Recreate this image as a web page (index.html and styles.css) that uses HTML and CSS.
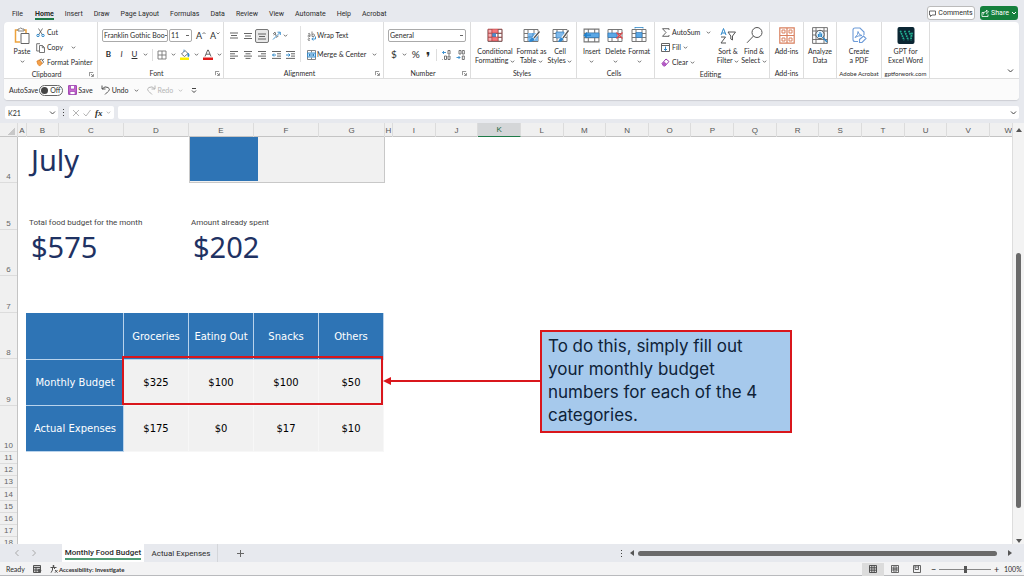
FILE: index.html
```html
<!DOCTYPE html>
<html lang="en">
<head>
<meta charset="utf-8">
<title>Monthly Food Budget</title>
<link rel="stylesheet" href="styles.css">
</head>
<body>
<svg class="defs" aria-hidden="true">
  <symbol id="chev" viewBox="0 0 6 6"><path d="M1 2l2 2 2-2" fill="none" stroke="#555" stroke-width="1"/></symbol>
  <symbol id="launch" viewBox="0 0 6 6"><path d="M.5 5V.5H5M2.500 2.500L5 5M5.300 2.500V5.300H2.500" fill="none" stroke="#555" stroke-width=".8"/></symbol>
  <symbol id="sheet" viewBox="0 0 16 16"><path d="M1 2h14v12H1zM1 6h14M1 10h14M5 2v12M11 2v12" fill="#fff" stroke="#777" stroke-width="1"/></symbol>
</svg>

<nav class="tabs">
  <button>File</button><button class="current">Home</button><button>Insert</button><button>Draw</button><button>Page Layout</button><button>Formulas</button><button>Data</button><button>Review</button><button>View</button><button>Automate</button><button>Help</button><button>Acrobat</button>
  <div class="tab-actions">
    <button class="comments"><svg width="7" height="7" viewBox="0 0 7 7"><path d="M.5 1h6v4H3L1.500 6.500V5h-1z" fill="none" stroke="#444" stroke-width=".8"/></svg>Comments</button>
    <button class="share"><svg width="8" height="8" viewBox="0 0 8 8"><path d="M3 3.500H1v4h6V5.500M2.500 5.500c0-2 1-3 3-3V1L7.500 3 5.500 4.700V3.500" fill="none" stroke="#fff" stroke-width=".8"/></svg>Share<svg width="6" height="6" viewBox="0 0 6 6"><path d="M1 2l2 2 2-2" fill="none" stroke="#fff"/></svg></button>
  </div>
</nav>

<header class="ribbon">
  <div class="groups">
    <section class="group clip">
      <div class="tools">
        <button class="big paste"><svg width="16" height="17" viewBox="0 0 16 17"><path d="M6 15H1.500V3H12v4" fill="none" stroke="#eda23c" stroke-width="1.500"/><path d="M4 4V2h1.500Q6.500-.5 8 2h2v2z" fill="#fff" stroke="#777" stroke-width=".9"/><path d="M7 6.500h8v10H7z" fill="#fff" stroke="#666"/></svg><span>Paste</span><svg class="c"><use href="#chev"/></svg></button>
        <div class="stack">
          <button><svg width="9" height="9" viewBox="0 0 9 9"><path d="M2.500.5l4 6.500M6.500.5l-4 6.500" stroke="#555" fill="none" stroke-width=".8"/><circle cx="2" cy="7.500" r="1.200" fill="none" stroke="#2f88c9"/><circle cx="7" cy="7.500" r="1.200" fill="none" stroke="#2f88c9"/></svg>Cut</button>
          <button><svg width="9" height="10" viewBox="0 0 9 10"><path d="M3 8H.7V.7H4M3.500 2.500h3l2 2v5h-5zM6.300 2.700v2h2" fill="none" stroke="#666" stroke-width=".9"/></svg>Copy<svg class="c far"><use href="#chev"/></svg></button>
          <button><svg width="9" height="9" viewBox="0 0 10 9"><path d="M1 3l3-1.500 3 4L4 8.500Q1.500 7 1 3z" fill="#f5a04a" stroke="#d97b1d" stroke-width=".8"/><path d="M4 2l2-1.500L8.500 4 7 5.500M6.500 2.500L9 .5" fill="none" stroke="#555" stroke-width=".9"/></svg>Format Painter</button>
        </div>
      </div>
      <footer><span>Clipboard</span><svg class="l"><use href="#launch"/></svg></footer>
    </section>

    <section class="group font">
      <div class="tools rows">
        <div class="line">
          <select class="face" aria-label="Font"><option>Franklin Gothic Boo</option></select>
          <select class="size" aria-label="Font size"><option>11</option></select>
          <button class="grow" aria-label="Increase font size">A<svg width="4" height="4" viewBox="0 0 4 4"><path d="M.5 3L2 1.500 3.500 3" fill="none" stroke="#555" stroke-width=".8"/></svg></button>
          <button class="shrink" aria-label="Decrease font size">A<svg width="4" height="4" viewBox="0 0 4 4"><path d="M.5 1.500L2 3 3.500 1.500" fill="none" stroke="#555" stroke-width=".8"/></svg></button>
        </div>
        <div class="line marks">
          <button class="b">B</button><button class="i">I</button><button class="u">U</button><svg class="c"><use href="#chev"/></svg>
          <span class="bar"></span>
          <button aria-label="Borders"><svg width="10" height="10" viewBox="0 0 10 10"><path d="M1 1h8v8H1zM5 1v8M1 5h8" fill="none" stroke="#777" stroke-width=".9"/></svg></button><svg class="c"><use href="#chev"/></svg>
          <button aria-label="Fill color"><svg width="10" height="11" viewBox="0 0 10 11"><path d="M1.500 5L5 1.500 8 4.500 4.500 7.500z" fill="#fff" stroke="#666" stroke-width=".9"/><path d="M8 4q2 2 .8 3.500T8 4M4 3V.5" fill="#2f88c9" stroke="#2f88c9" stroke-width=".7"/><path d="M0 8.500h9V11H0z" fill="#fdf000"/></svg></button><svg class="c"><use href="#chev"/></svg>
          <button aria-label="Font color"><svg width="10" height="11" viewBox="0 0 10 11"><path d="M2 7.500L4.700 1h.6L8 7.500M3 5.200h4" fill="none" stroke="#555" stroke-width=".9"/><path d="M0 8.500h10V11H0z" fill="#e01b1b"/></svg></button><svg class="c"><use href="#chev"/></svg>
        </div>
      </div>
      <footer><span>Font</span><svg class="l"><use href="#launch"/></svg></footer>
    </section>

    <section class="group align">
      <div class="tools split">
        <div class="rows">
          <div class="line al">
            <button aria-label="Top align"><svg width="8" height="8" viewBox="0 0 8 8"><path d="M0 1h8M1 3.500h6M0 6h8" stroke="#555" stroke-width=".9"/></svg></button>
            <button aria-label="Middle align"><svg width="8" height="8" viewBox="0 0 8 8"><path d="M0 1.500h8M1 4h6M0 6.500h8" stroke="#555" stroke-width=".9"/></svg></button>
            <button class="on" aria-label="Bottom align"><svg width="8" height="8" viewBox="0 0 8 8"><path d="M0 2h8M1 4.500h6M0 7h8" stroke="#555" stroke-width=".9"/></svg></button>
            <button aria-label="Orientation"><svg width="9" height="9" viewBox="0 0 9 9"><path d="M1 8.500L8 1.500M5.500 1.200L8.300 1.200V4" fill="none" stroke="#2f88c9" stroke-width=".9"/><path d="M1 3l2-2 1 4M1.500 4L4 2.500M4 6.500L6.500 5" fill="none" stroke="#666" stroke-width=".8"/></svg></button><svg class="c"><use href="#chev"/></svg>
          </div>
          <div class="line al">
            <button aria-label="Align left"><svg width="8" height="8" viewBox="0 0 8 8"><path d="M0 .5h8M0 2.800h5M0 5.100h8M0 7.400h5" stroke="#555" stroke-width=".9"/></svg></button>
            <button aria-label="Center"><svg width="8" height="8" viewBox="0 0 8 8"><path d="M0 .5h8M1.500 2.800h5M0 5.100h8M1.500 7.400h5" stroke="#555" stroke-width=".9"/></svg></button>
            <button aria-label="Align right"><svg width="8" height="8" viewBox="0 0 8 8"><path d="M0 .5h8M3 2.800h5M0 5.100h8M3 7.400h5" stroke="#555" stroke-width=".9"/></svg></button>
            <button aria-label="Decrease indent"><svg width="9" height="8" viewBox="0 0 9 8"><path d="M0 .5h9M5 2.800h4M5 5.100h4M0 7.400h9" stroke="#555" stroke-width=".9"/><path d="M4 4H.5M2 2.500L.5 4 2 5.500" fill="none" stroke="#2f88c9"/></svg></button>
            <button aria-label="Increase indent"><svg width="9" height="8" viewBox="0 0 9 8"><path d="M0 .5h9M5 2.800h4M5 5.100h4M0 7.400h9" stroke="#555" stroke-width=".9"/><path d="M0 4h4M2.500 2.500L4 4 2.500 5.500" fill="none" stroke="#2f88c9"/></svg></button>
          </div>
        </div>
        <div class="rows wrap">
          <div class="line"><button><svg width="9" height="10" viewBox="0 0 9 10"><path d="M1 3q2-1.500 2 .5v2M3 4Q.5 4 1 5.500T3 5M5 .5v5Q8 6 7.500 4T5 3.500M3 7.500Q.5 7.500 1 8.800T3 9" fill="none" stroke="#777" stroke-width=".9"/><path d="M8.500 5.500v2.500H5M6.300 6.500L4.800 8l1.500 1.500" fill="none" stroke="#2f88c9" stroke-width=".9"/></svg>Wrap Text</button></div>
          <div class="line"><button><svg width="9" height="10" viewBox="0 0 9 10"><path d="M.5.5h8v9h-8zM4.500.5v2M4.500 7.500v2" fill="#fff" stroke="#777" stroke-width=".9"/><path d="M.5 3h8v4h-8z" fill="#bfe0f7" stroke="#2f88c9" stroke-width=".9"/><path d="M2 5h5M3 4L2 5l1 1M6 4l1 1-1 1" fill="none" stroke="#1769a8" stroke-width=".7"/></svg>Merge &amp; Center<svg class="c far"><use href="#chev"/></svg></button></div>
        </div>
      </div>
      <footer><span>Alignment</span><svg class="l"><use href="#launch"/></svg></footer>
    </section>

    <section class="group number">
      <div class="tools rows">
        <div class="line"><select class="format" aria-label="Number format"><option>General</option></select></div>
        <div class="line nums">
          <button>$</button><svg class="c"><use href="#chev"/></svg><button>%</button><button class="comma">&#10076;</button><span class="bar"></span>
          <button aria-label="Increase decimal"><svg width="9" height="10" viewBox="0 0 9 10"><path d="M4 2.500H.5M2 1L.5 2.500 2 4" fill="none" stroke="#2f88c9" stroke-width=".9"/><path d="M6 .5h2v3.500H6zM2.500 6h2v3.500h-2zM6 6h2v3.500H6zM.5 9v.6" fill="none" stroke="#666" stroke-width=".9"/></svg></button>
          <button aria-label="Decrease decimal"><svg width="9" height="10" viewBox="0 0 9 10"><path d="M.5 7.500H4M2.500 6L4 7.500 2.500 9" fill="none" stroke="#2f88c9" stroke-width=".9"/><path d="M3 .5h2v3.500H3zM6.300.5h2v3.500h-2zM6.300 6h2v3.500h-2z" fill="none" stroke="#666" stroke-width=".9"/></svg></button>
        </div>
      </div>
      <footer><span>Number</span><svg class="l"><use href="#launch"/></svg></footer>
    </section>

    <section class="group styles">
      <div class="tools even">
        <button class="big w40"><svg width="16" height="16"><use href="#sheet"/><path d="M5 2h6v4H5zM5 10h6v4H5z" fill="#f4777c"/><path d="M1 2h4v12H1z" fill="#f4777c" opacity=".6"/><path d="M5 6h4v4H5z" fill="#4a8fd0"/><path d="M1 2h14v12H1zM5 2v12M11 2v12M1 6h14M1 10h14" fill="none" stroke="#a33" stroke-width=".5"/></svg><span>Conditional<br>Formatting <svg class="c"><use href="#chev"/></svg></span></button>
        <button class="big w32"><svg width="17" height="16"><use href="#sheet" width="16"/><path d="M5 6h10v8H5z" fill="#7db9ec"/><path d="M5 10h10M10 6v8" stroke="#2f78b8" stroke-width=".7"/><path d="M16 5l-6 7" stroke="#fff" stroke-width="3"/><path d="M16.500 4.500L11 11" stroke="#555" stroke-width="1.300"/><path d="M6 15q1-4 4-4.500 2 1 1 2.500-2 2.500-5 2z" fill="#2f88d0"/></svg><span>Format as<br>Table <svg class="c"><use href="#chev"/></svg></span></button>
        <button class="big w26"><svg width="17" height="16"><use href="#sheet" width="16"/><path d="M4 5h8v6H4z" fill="#7db9ec" stroke="#2f78b8" stroke-width=".7"/><path d="M16 4l-6 8" stroke="#fff" stroke-width="3"/><path d="M16.500 3.500L11 11" stroke="#555" stroke-width="1.300"/><path d="M6 15q1-4 4-4.500 2 1 1 2.500-2 2.500-5 2z" fill="#2f88d0"/></svg><span>Cell<br>Styles <svg class="c"><use href="#chev"/></svg></span></button>
      </div>
      <footer><span>Styles</span></footer>
    </section>

    <section class="group cells">
      <div class="tools even">
        <button class="big w24"><svg width="17" height="16"><use href="#sheet" width="17"/><path d="M3 6h13v4.500H3z" fill="#5ba8e6" stroke="#2f78b8" stroke-width=".7"/><path d="M8 8.200H1.500M4 5.700L1.300 8.200 4 10.700" fill="none" stroke="#1e7ec8" stroke-width="1.200"/></svg><span>Insert<br><svg class="c"><use href="#chev"/></svg></span></button>
        <button class="big w24"><svg width="17" height="16"><use href="#sheet" width="16"/><path d="M1 6h9v4.500H1z" fill="#5ba8e6" stroke="#2f78b8" stroke-width=".7"/><path d="M9.500 5.500l6 6M15.500 5.500l-6 6" stroke="#e0454b" stroke-width="1.300"/></svg><span>Delete<br><svg class="c"><use href="#chev"/></svg></span></button>
        <button class="big w24"><svg width="16" height="16"><use href="#sheet"/><path d="M5 5.500h6v5H5z" fill="#5ba8e6" stroke="#2f78b8" stroke-width=".7"/><path d="M4 .5h8M4 0v1.500M12 0v1.500" stroke="#2f88c9" stroke-width=".8"/></svg><span>Format<br><svg class="c"><use href="#chev"/></svg></span></button>
      </div>
      <footer><span>Cells</span></footer>
    </section>

    <section class="group editing">
      <div class="tools">
        <div class="stack">
          <button><svg width="9" height="9" viewBox="0 0 9 9"><path d="M8 2V.7H1.500L5 4.500 1.500 8.300H8V7" fill="none" stroke="#555" stroke-width=".9"/></svg>AutoSum<svg class="c far"><use href="#chev"/></svg></button>
          <button><svg width="9" height="9" viewBox="0 0 9 9"><path d="M.5.5h8v8h-8zM.5 2.500h8" fill="#fff" stroke="#555" stroke-width=".9"/><path d="M4.500 3.500v4M3 6l1.500 1.500L6 6" fill="none" stroke="#2f88c9"/></svg>Fill<svg class="c"><use href="#chev"/></svg></button>
          <button><svg width="9" height="9" viewBox="0 0 9 9"><path d="M1 5.500l4-4.500 3 2.500-4 4.500H2.500z" fill="#fff" stroke="#9b3fae"/><path d="M1 5.500L3 3.500l3 2.500-2 2H2.500z" fill="#b35ac4"/></svg>Clear<svg class="c"><use href="#chev"/></svg></button>
        </div>
        <button class="big w26"><svg width="16" height="16" viewBox="0 0 16 16"><path d="M1 7.500L3.500 1 6 7.500M1.800 5.500h3.400" fill="none" stroke="#2f88c9"/><path d="M1 9.500h4.500L1 15.500h5" fill="none" stroke="#555"/><path d="M8 4.500h7.500l-3 4v4l-1.700-1v-3z" fill="none" stroke="#555"/></svg><span>Sort &amp;<br>Filter <svg class="c"><use href="#chev"/></svg></span></button>
        <button class="big w26"><svg width="17" height="17" viewBox="0 0 17 17"><circle cx="11" cy="5.500" r="5" fill="none" stroke="#555"/><path d="M7.500 9L1 15.800" stroke="#555"/></svg><span>Find &amp;<br>Select <svg class="c"><use href="#chev"/></svg></span></button>
      </div>
      <footer><span>Editing</span></footer>
    </section>

    <section class="group addins">
      <div class="tools"><button class="big"><svg width="16" height="17" viewBox="0 0 16 17"><path d="M.8.800h14.400v15.400H.800zM8 .8v15.400M.8 8.500h14.400" fill="none" stroke="#d9805f" stroke-width="1.200"/><path d="M3 3h3v3H3zM10 3h3v3h-3zM3 11h3v3H3zM10 11h3v3h-3z" fill="#fff" stroke="#d9805f"/></svg><span>Add-ins</span></button></div>
      <footer><span>Add-ins</span></footer>
    </section>
    <section class="group analyze">
      <div class="tools"><button class="big"><svg width="16" height="17" viewBox="0 0 16 17"><path d="M.6.600h14.800v15.800H.600zM.6 4h14.800M.6 12.500h14.800M4 .6v15.800M12 .6v15.800M.6 8h3.400" fill="none" stroke="#666" stroke-width=".9"/><circle cx="8" cy="7.500" r="4.200" fill="#e4f2fc" stroke="#555"/><path d="M6.500 10V7M8 10V5M9.500 10V6.500" stroke="#2f88c9" stroke-width="1.200"/><path d="M11 10.500l4 4.500" stroke="#2f88c9" stroke-width="1.500"/></svg><span>Analyze<br>Data</span></button></div>
    </section>
    <section class="group acrobat">
      <div class="tools"><button class="big"><svg width="15" height="17" viewBox="0 0 15 17"><path d="M6 14.500H3q-2 0-2-2V3q0-2 2-2h5l4 4v3" fill="none" stroke="#6d9bd8" stroke-width="1.100"/><path d="M3 10.500Q6.500 7.500 6 4.500 7 8.500 10 8.500 6 8.500 3 10.500" fill="none" stroke="#6d9bd8"/><path d="M7.500 12.500l4-3.500 2.500 2.500-4 4H7.500z" fill="#fff" stroke="#6d9bd8" stroke-width="1.100"/></svg><span>Create<br>a PDF</span></button></div>
      <footer><span>Adobe Acrobat</span></footer>
    </section>
    <section class="group gpt">
      <div class="tools"><button class="big"><svg width="18" height="18" viewBox="0 0 18 18"><rect width="18" height="18" rx="2" fill="#0b2633"/><path d="M3 4l4 10M7.500 4l4 10M12 4l2.500 6M15.500 6l-1.500 8" stroke="#22b392" stroke-width="1.800" stroke-dasharray="1.800 .8"/></svg><span>GPT for<br>Excel Word</span></button></div>
      <footer><span>gptforwork.com</span></footer>
    </section>
    <button class="collapse" aria-label="Collapse ribbon"><svg width="7" height="6" viewBox="0 0 7 6"><path d="M1 1.500L3.500 4 6 1.500" fill="none" stroke="#444"/></svg></button>
  </div>

  <div class="quick">
    <label class="autosave">AutoSave<input type="checkbox"><span class="toggle"><i></i>Off</span></label>
    <button class="save"><svg width="9" height="10" viewBox="0 0 9 10"><path d="M.6.600h7.800v8.800H.600z" fill="#c868d0" stroke="#9b3fae"/><path d="M2.500.5h4v3.500h-4zM2 6.500h5v3H2z" fill="#fff" stroke="#9b3fae" stroke-width=".7"/></svg>Save</button>
    <button class="undo"><svg width="9" height="10" viewBox="0 0 9 10"><path d="M1 .5V4h3.500M1 4Q4 .5 7 2.500T6.500 7L4 9.500" fill="none" stroke="#555"/></svg>Undo<svg class="c"><use href="#chev"/></svg></button>
    <button class="redo" disabled><svg width="9" height="10" viewBox="0 0 9 10"><path d="M8 .5V4H4.500M8 4Q5 .5 2 2.500T2.500 7L5 9.500" fill="none" stroke="#b5b5b5"/></svg>Redo<svg class="c"><use href="#chev"/></svg></button>
    <button aria-label="Customize toolbar"><svg width="6" height="7" viewBox="0 0 6 7"><path d="M1 1.500h4M1 3.500L3 5.500 5 3.500" fill="none" stroke="#444"/></svg></button>
  </div>
</header>

<div class="formula">
  <label class="namebox"><input value="K21" aria-label="Name box"><svg width="7" height="6" viewBox="0 0 7 6"><path d="M1 1.500L3.500 4 6 1.500" fill="none" stroke="#555"/></svg></label>
  <span class="dots"></span>
  <div class="fx"><svg width="8" height="8" viewBox="0 0 8 8"><path d="M1 1l6 6M7 1L1 7" stroke="#b5b5b5"/></svg><svg width="8" height="8" viewBox="0 0 8 8"><path d="M.5 4.500L3 7l4.500-6" fill="none" stroke="#b5b5b5"/></svg><button>fx</button><svg class="c faint"><use href="#chev"/></svg></div>
  <label class="entry"><input aria-label="Formula bar"><svg width="7" height="6" viewBox="0 0 7 6"><path d="M1 1.500L3.500 4 6 1.500" fill="none" stroke="#444"/></svg></label>
</div>

<main class="book">
  <div class="pane">
    <div class="cols"><span class="corner"></span><span>A</span><span>B</span><span>C</span><span>D</span><span>E</span><span>F</span><span>G</span><span>H</span><span>I</span><span>J</span><span class="sel">K</span><span>L</span><span>M</span><span>N</span><span>O</span><span>P</span><span>Q</span><span>R</span><span>S</span><span>T</span><span>U</span><span>V</span><span>W</span></div>
    <div class="view">
      <div class="rownums"><span>4</span><span>5</span><span>6</span><span>7</span><span>8</span><span>9</span><span>10</span><span>11</span><span>12</span><span>13</span><span>14</span><span>15</span><span>16</span><span>17</span><span>18</span></div>
      <div class="sheet">
        <div class="top">
          <h1>July</h1>
          <div class="progress"><div class="spent"></div></div>
        </div>
        <div class="totals">
          <div><p>Total food budget for the month</p><strong>$575</strong></div>
          <div><p>Amount already spent</p><strong>$202</strong></div>
        </div>
        <table>
          <colgroup><col class="first"><col><col><col><col></colgroup>
          <tr><th></th><th>Groceries</th><th>Eating Out</th><th>Snacks</th><th>Others</th></tr>
          <tr><th>Monthly Budget</th><td>$325</td><td>$100</td><td>$100</td><td>$50</td></tr>
          <tr><th>Actual Expenses</th><td>$175</td><td>$0</td><td>$17</td><td>$10</td></tr>
        </table>
        <div class="frame"></div>
        <svg class="arrow" width="158" height="10" viewBox="0 0 158 10"><path d="M6 5h152" stroke="#d9161c" stroke-width="2"/><path d="M0 5l8-4v8z" fill="#d9161c"/></svg>
        <div class="note">To do this, simply fill out your monthly budget numbers for each of the 4 categories.</div>
      </div>
    </div>
  </div>
  <div class="vscroll"><i class="up"></i><div class="vtrack"><div class="vthumb"></div></div><i class="down"></i></div>
</main>

<div class="sheetbar">
  <button class="nav" aria-label="Previous sheet"><svg width="6" height="8" viewBox="0 0 6 8"><path d="M4.500 1L1.500 4l3 3" fill="none" stroke="#aaa"/></svg></button>
  <button class="nav" aria-label="Next sheet"><svg width="6" height="8" viewBox="0 0 6 8"><path d="M1.500 1l3 3-3 3" fill="none" stroke="#aaa"/></svg></button>
  <button class="tab active"><span>Monthly Food Budget</span></button>
  <button class="tab">Actual Expenses</button>
  <button class="add" aria-label="New sheet"><svg width="7" height="7" viewBox="0 0 7 7"><path d="M3.500 0v7M0 3.500h7" stroke="#666"/></svg></button>
  <div class="hscroll"><span class="dots"></span><i class="left"></i><div class="hthumb"></div><i class="right"></i></div>
</div>

<footer class="status">
  <span>Ready</span>
  <svg width="9" height="8" viewBox="0 0 9 8"><path d="M.5.5h7v7h-7zM.5 2.500h7M3 2.500v5M.5 5h7" fill="#ccc" stroke="#444" stroke-width=".9"/><circle cx="6.500" cy="5.500" r="1.800" fill="#555"/></svg>
  <button class="access"><svg width="8" height="8" viewBox="0 0 8 8"><circle cx="3.500" cy="1" r=".9" fill="#444"/><path d="M.5 2.500h6M2.500 2.500v2.500L1 7.700M4.500 2.500V4M5 5l2.500 2.700M7.500 5L5 7.700" fill="none" stroke="#444" stroke-width=".9"/></svg>Accessibility: Investigate</button>
  <div class="views">
    <button class="on" aria-label="Normal view"><svg width="8" height="8" viewBox="0 0 8 8"><path d="M.5.5h7v7h-7zM.5 2.800h7M.5 5.200h7M2.800.5v7M5.200.5v7" fill="none" stroke="#444" stroke-width=".9"/></svg></button>
    <button aria-label="Page layout view"><svg width="8" height="8" viewBox="0 0 8 8"><path d="M.5.5h7v7h-7zM2 2h4v4H2zM2 3.300h4M2 4.700h4" fill="none" stroke="#555" stroke-width=".9"/></svg></button>
    <button aria-label="Page break view"><svg width="8" height="8" viewBox="0 0 8 8"><path d="M.5.5h7v7h-7zM2 .5v4h3.500v-4M2 2h3" fill="none" stroke="#555" stroke-width=".9"/></svg></button>
    <span class="minus">−</span><input type="range" min="0" max="100" value="50" aria-label="Zoom"><span class="plus">+</span><span class="pct">100%</span>
  </div>
</footer>
</body>
</html>
```

FILE: styles.css
```css
* { box-sizing: border-box; }
body {
  margin: 0; height: 100vh; overflow: hidden;
  display: flex; flex-direction: column;
  background: #e7e9ee; color: #2b2b2b;
  font: 7px/9px Lato, "Open Sans", sans-serif;
}
button, input, select { font: inherit; color: inherit; border: 0; background: none; padding: 0; margin: 0; }
button { display: inline-flex; align-items: center; justify-content: center; white-space: nowrap; }
svg { flex: none; display: block; }
.defs { position: absolute; width: 0; height: 0; }
.c { width: 5px; height: 5px; display: inline-block; vertical-align: middle; }
.l { width: 5px; height: 5px; }
.bar { width: 1px; height: 12px; background: #ddd; }

/* tabs */
.tabs { display: flex; align-items: flex-end; gap: 11px; height: 22px; padding: 0 6px 2px 12px; flex: none; font-family: Roboto, sans-serif; }
.tabs > button { height: 12px; padding-top: 2px; border-bottom: 1px solid transparent; }
.tabs .current { font-weight: 700; border-bottom: 2px solid #1e7a48; margin-left: 1px; }
.tab-actions { margin-left: auto; display: flex; gap: 5px; }
.tab-actions button { height: 14px; border-radius: 3px; gap: 2px; }
.comments { width: 48px; background: #fff; border: 1px solid #bbb; }
.share { width: 38px; background: #15803d; color: #fff; }

/* ribbon */
.ribbon { margin: 0 5px 0 4px; border-radius: 4px; background: #fff; flex: none; box-shadow: 0 1px 1px #ccced3; }
.groups { display: flex; height: 57px; border-bottom: 1px solid #ddd; }
.group { display: flex; flex-direction: column; border-right: 1px solid #ddd; padding-top: 4px; flex: none; }
.tools { display: flex; flex: 1; }
.group > footer { display: flex; height: 10px; align-items: center; padding-right: 3px; }
.group > footer span { flex: 1; text-align: center; white-space: nowrap; }
.clip { width: 94px; } .font { width: 126px; } .align { width: 160px; } .number { width: 87px; }
.styles { width: 106px; } .cells { width: 78px; } .editing { width: 115px; } .addins { width: 34px; }
.analyze { width: 33px; } .acrobat { width: 45px; } .gpt { width: 48px; }
.acrobat > footer, .gpt > footer, .addins > footer { padding: 0; justify-content: center; }
.acrobat > footer span, .gpt > footer span { flex: none; font-size: 6px; }
.big { flex-direction: column; justify-content: flex-start; align-items: center; gap: 3px; padding-top: 1px; flex: 1; line-height: 9px; }
.big > svg:first-child { height: 17px; }
.even { padding: 0 3px; }
.w40 { flex: 0 0 42px; } .w32 { flex: 0 0 31px; } .w26 { flex: 0 0 26px; } .w24 { flex: 1; }
.paste { flex: 0 0 32px; padding-left: 4px; }
.stack { display: flex; flex-direction: column; margin-top: -1px; }
.stack button { height: 15px; gap: 2px; justify-content: flex-start; }
.clip .far { margin-left: 6px; }
.editing .stack { width: 56px; padding-left: 6px; margin-right: 4px; }
.editing .far { margin-left: auto; }
.rows { display: flex; flex-direction: column; gap: 4px; padding-top: 2px; }
.line { display: flex; align-items: center; height: 15px; }
.font .rows { padding-left: 4px; }
select {
  appearance: none; height: 13px; border: 1px solid #aaa; border-radius: 2px; padding: 0 6px 0 1px;
  background: #fff linear-gradient(#666, #666) right 2px center / 3px 1px no-repeat;
}
.face { width: 66px; padding-right: 1px; background-position: right 0 center; background-size: 2px 1px; }
.size { width: 23px; margin-left: 1px; } .format { width: 78px; }
.grow, .shrink { font-size: 9px; margin-left: 4px; }
.grow svg, .shrink svg { align-self: flex-start; }
.marks { gap: 4px; padding-left: 2px; }
.marks .b { font-weight: 700; width: 9px; } .marks .i { font-style: italic; width: 9px; } .marks .u { text-decoration: underline; width: 9px; }
.marks button { font-size: 8px; }
.align .split > .rows { padding-left: 3px; width: 77px; border-right: 1px solid #e2e2e2; margin-bottom: 6px; }
.al button { width: 14px; height: 14px; }
.al .on { border: 1px solid #777; border-radius: 2px; background: #e8e8e8; }
.align .split > .wrap { flex: 1; border: 0; padding-left: 6px; }
.wrap button { gap: 1px; }
.wrap .far { margin-left: 5px; }
.number > .rows { padding-left: 4px; }
.nums { gap: 5px; padding-left: 3px; }
.nums button { font-size: 10px; }
.nums .comma { font-family: "DejaVu Sans", sans-serif; font-size: 14px; margin: 5px 1px 0; }
.collapse { margin-left: auto; align-self: flex-end; padding: 0 5px 4px; }
.quick { display: flex; align-items: center; height: 21px; padding: 1px 0 0 5px; background: #fbfbfb; border-radius: 0 0 4px 4px; }
.quick button { gap: 2px; margin-right: 8px; }
.quick .save { gap: 1px; }
.quick .c { margin-left: 3px; }
.redo { color: #b5b5b5; }
.redo .c { opacity: .4; }
.autosave { display: flex; align-items: center; gap: 1px; margin-right: 5px; }
.autosave input { position: absolute; opacity: 0; width: 1px; height: 1px; }
.toggle { display: flex; align-items: center; gap: 2px; width: 24px; height: 11px; border: 1px solid #666; border-radius: 6px; padding-left: 1px; background: #fff; }
.toggle i { width: 7px; height: 7px; border-radius: 50%; background: #444; }

/* formula bar */
.formula { display: flex; height: 13px; margin: 6px 5px 4px 5px; gap: 4px; flex: none; align-items: stretch; }
.formula label, .fx { background: #fff; display: flex; align-items: center; border-radius: 2px; }
.namebox { width: 53px; padding: 0 2px 0 3px; }
.formula input { flex: 1; min-width: 0; height: 13px; }
.dots { width: 1px; align-self: center; height: 7px; background: linear-gradient(#444 1px, transparent 1px) 0 0 / 1px 3px; flex: none; margin: 0 1px; }
.fx { width: 45px; justify-content: space-around; padding: 0 1px; }
.fx button { font: italic 700 9px/12px "Liberation Serif", serif; }
.faint { opacity: .5; }
.entry { flex: 1; padding-right: 2px; }

/* workbook */
.book { flex: 1; min-height: 0; display: flex; background: #fff; }
.pane { flex: 1; min-width: 0; display: flex; flex-direction: column; }
.cols { display: grid; grid-template-columns: 18px 9px 32px 65px 65px 65px 65px 66px 8px repeat(14, 1fr) 22px; height: 14px; background: #f0f0f0; border-bottom: 1px solid #c4c4c4; flex: none; }
.cols span { display: flex; align-items: center; justify-content: center; border-right: 1px solid #dcdcdc; font: 8px/12px "Liberation Sans", sans-serif; color: #555; min-width: 0; padding-top: 1px; }
.cols span:last-child { justify-content: flex-end; border: 0; }
.cols .sel { background: #d4d6d8; border-bottom: 1px solid #1e7a48; color: #1e6a42; }
.cols .corner { background: linear-gradient(135deg, transparent 50%, #c8c8c8 50%) right 2px bottom 2px / 7px 7px no-repeat; }
.view { flex: 1; min-height: 0; overflow: hidden; display: grid; grid-template-columns: 18px 1fr; }
.rownums { display: grid; grid-template-rows: 46px 47px 46px 37px 46px 47px 46px repeat(8, 1fr); height: calc(100% + 5px); background: #f0f0f0; border-right: 1px solid #c4c4c4; }
.rownums span { display: flex; align-items: flex-end; justify-content: center; border-bottom: 1px solid #dcdcdc; font: 8px/10px "Liberation Sans", sans-serif; color: #666; }
.sheet { position: relative; padding-left: 9px; }
.top { display: flex; height: 46px; }
h1, strong { margin: 0; font: 400 29px/34px "Noto Sans", sans-serif; color: #1f3263; }
h1 { width: 162px; padding: 6px 0 0 4px; }
.progress { width: 196px; border: 1px solid #c8c8c8; border-top: 0; background: #f1f1f1; }
.spent { width: 35%; height: 44px; background: #2e74b5; }
.totals { display: flex; height: 130px; padding-top: 34px; }
.totals div { width: 162px; }
.totals p { margin: 0; padding-left: 2px; font: 8px/12px Roboto, sans-serif; color: #444; }
.totals strong { display: block; padding-left: 4px; line-height: 36px; }
table { border-collapse: collapse; table-layout: fixed; width: 357px; margin-left: -1px; font: 10px/14px "DejaVu Sans", sans-serif; }
col { width: 65px; } .first { width: 97px; }
tr { height: 46px; }
th, td { padding: 0; text-align: center; }
th { background: #2e74b5; color: #fff; font-weight: 400; border: 1px solid #b9d3ec; }
tr:first-child th { border-top-color: #2e74b5; }
th:first-child { border-left-color: #2e74b5; }
td { background: #f1f1f1; color: #000; border: 1px solid #f7f7f7; }
.frame { position: absolute; left: 104px; top: 219px; width: 261px; height: 49px; border: 2px solid #d9161c; }
.arrow { position: absolute; left: 365px; top: 239px; }
.note { position: absolute; left: 522px; top: 193px; width: 252px; height: 103px; border: 2px solid #d9161c; background: #a6c9ec; color: #0e2238; font: 17px/23px Inter, sans-serif; padding: 3px 26px 0 6px; }
.vscroll { width: 12px; background: #f3f3f3; border-left: 1px solid #ddd; display: flex; flex-direction: column; align-items: center; padding: 5px 0 1px; }
.vscroll i { border: 3px solid transparent; }
.up { border-bottom: 4px solid #555 !important; border-top: 0 !important; }
.down { border-top: 4px solid #555 !important; border-bottom: 0 !important; }
.vtrack { flex: 1; width: 5px; padding-top: 121px; }
.vthumb { height: 89%; background: #6a6a6a; border-radius: 3px; }

/* sheet tabs */
.sheetbar { display: flex; height: 18px; flex: none; padding-left: 14px; align-items: stretch; font: 8px/11px Roboto, sans-serif; }
.nav { width: 6px; margin-right: 11px; }
.tab { width: 72px; }
.active { width: 82px; margin: 0 1px 0 14px; background: #fff; font-weight: 500; }
.active span { border-bottom: 2px solid #4f9c74; }
.add { width: 46px; border-left: 1px solid #d4d6da; }
.hscroll { margin-left: auto; width: 40%; display: flex; align-items: center; padding-right: 12px; gap: 4px; }
.hscroll .dots { margin-right: 4px; }
.hthumb { flex: 1; height: 5px; background: #6a6a6a; border-radius: 3px; }
.hscroll i { border: 3px solid transparent; }
.left { border-right: 4px solid #555 !important; border-left: 0 !important; }
.right { border-left: 4px solid #555 !important; border-right: 0 !important; margin-left: 7px; }

/* status bar */
.status { display: flex; align-items: center; height: 14px; flex: none; background: #f3f3f4; padding: 1px 5px 0 6px; border-bottom: 1px solid #b9babd; gap: 8px; }
.access { gap: 1px; font-size: 6px; font-weight: 700; }
.views { margin-left: auto; display: flex; align-items: center; height: 13px; }
.views button { width: 22px; height: 13px; }
.views .on { background: #dcdcdc; }
.minus, .plus { font-size: 9px; width: 5px; text-align: center; margin: 0 3px; }
.pct { width: 15px; margin-left: 2px; }
input[type=range] { appearance: none; width: 52px; height: 8px; background: linear-gradient(#888, #888) center / 100% 1px no-repeat; }
input[type=range]::-webkit-slider-thumb { appearance: none; width: 3px; height: 7px; background: #555; }
```
